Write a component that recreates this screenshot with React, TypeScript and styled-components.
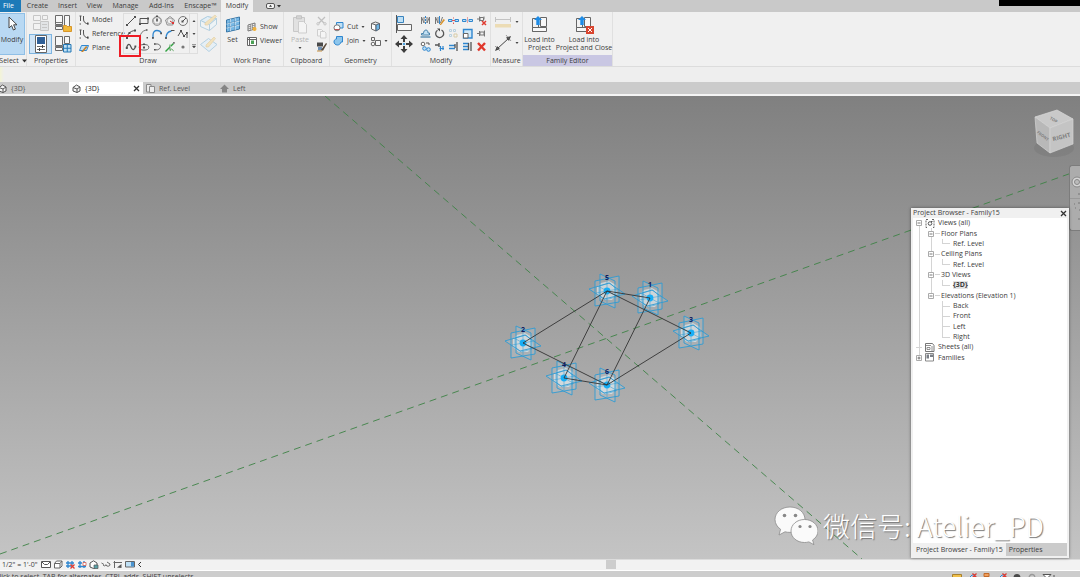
import React from "react";
import styled, { createGlobalStyle, css } from "styled-components";

const ink = "#505050";
const blue = "#2f86cf";
const pale = "#bfe0f5";

const GlobalStyle = createGlobalStyle`
  * { box-sizing: border-box; }
  html, body, #root { height: 100%; }
  body {
    margin: 0;
    overflow: hidden;
    background: #cbcbcb;
    color: #3c3c3c;
    font: 7px/8px "Open Sans", "Noto Sans", sans-serif;
  }
  button {
    margin: 0;
    padding: 0;
    border: 0;
    background: none;
    color: inherit;
    font: inherit;
    white-space: nowrap;
  }
  ul { margin: 0; padding: 0; list-style: none; }
  svg { display: block; flex: none; }
`;

/* ---------- icons ---------- */

type Art = { w: number; h: number; body: React.ReactNode };
const art = (w: number, h: number, body: React.ReactNode): Art => ({ w, h, body });

const icons = {
  cursor: art(12, 16, <path d="M3 1v11l2.6-2.4 1.8 4.4 2-.9-1.8-4.3H11z" fill="#fff" stroke="#444" />),
  typeFaded: art(18, 18, <g fill="#f2f2f2" stroke="#c6c6c6"><path d="M1.5 1.5h7v5h-7zM1.5 9.500h7v6h-7zM10.500 1.500h5v4h-5z" /><path d="M8.500 7.500h8v9h-8z" fill="#e2e4e6" /><path d="M10 10.500h5M10 13.500h5" /></g>),
  familyTypes: art(18, 18, <><path d="M1.500 1.500h7v9h-7zM1.500 12.500h7v3h-7zM10.500 1.500h5v11h-5z" fill="#f7f7f7" stroke="#6a6a6a" /><path d="M1 11.500h8M2 8.500h6" stroke="#777" /><path d="M9.500 11.500h3l1 1h4v5h-8z" fill="#f0b93a" stroke="#d9962a" /></>),
  properties: art(14, 18, <><path d="M1.500.5h11v17h-11z" fill="#fff" stroke="#666" /><path d="M3 2h8v7H3z" fill="#2e5f97" /><path d="M3 11.500h8M3 14.500h8" stroke="#666" /><path d="M8.500 10v3M5.500 13v3" stroke="#444" /></>),
  category: art(18, 18, <><path d="M1.500 1.500h7v9h-7zM1.500 12.500h7v3h-7zM10.500 1.500h5v7h-5z" fill="#f7f7f7" stroke="#6a6a6a" /><path d="M1 11.500h8" stroke="#777" /><path d="M9.500 9.500h7.500v7.500H9.500zM13.250 9.500V17M9.500 13.250H17" fill={pale} stroke="#2478b5" /></>),
  model: art(10, 10, <><path d="M4.500 1v3c0 3 1.500 4.500 5 5" fill="none" stroke="#555" /><path d="M.5 1h2M1.500 1v5M.5 9h1.500" stroke="#555" fill="none" /><path d="M8 7.500h1.500v2H8z" fill="#444" /></>),
  plane: art(10, 10, <><path d="M2.500 2.500h7l-2 5h-7z" fill={pale} stroke={blue} /><path d="M2 9l5-6 1.500 1L4 9z" fill="#c9822b" /></>),
  line: art(12, 12, <><path d="M2 10L10 2" stroke={ink} /><path d="M1 9h2v2H1zM9 1h2v2H9z" fill={ink} /></>),
  rect: art(12, 12, <><path d="M2 3.500h8v5H2z" fill="none" stroke={ink} /><path d="M1 8h2v2H1zM9 2.500h2v2H9z" fill={ink} /></>),
  polyIn: art(12, 12, <><circle cx="6" cy="6" r="4.500" fill="none" stroke="#888" strokeWidth=".8" /><path d="M6 1.500l4 3-1.500 4.500h-5L2 4.500z" fill="none" stroke="#777" strokeWidth=".6" /><path d="M5.200 3.500h1.600v3H5.200zM5 .5h2V2H5z" fill={ink} /></>),
  polyOut: art(12, 12, <><path d="M6 1.500l4.500 3.500-1.700 5H3.200L1.500 5z" fill="none" stroke="#777" strokeWidth=".8" /><circle cx="6" cy="6" r="2.800" fill="none" stroke="#999" strokeWidth=".7" /><path d="M6 6l3 2" stroke="#c33" /><path d="M8 7h2v2H8z" fill="#d33" /></>),
  circle: art(12, 12, <><circle cx="6" cy="6" r="4.500" fill="none" stroke="#777" /><path d="M5.500 6.500L9 3" stroke={ink} /><path d="M4.500 5.500h2v2h-2z" fill={ink} /></>),
  arcEnds: art(12, 12, <><path d="M2 10C2.500 6 5 3 10 2.500" fill="none" stroke={ink} /><path d="M1 9h2v2H1zM9 1.500h2v2H9zM3.500 4h2v2h-2z" fill={ink} /></>),
  arcCenter: art(12, 12, <><path d="M2 9C2.500 5 4.500 3 8 2" fill="none" stroke="#777" /><path d="M1 9h1.500v1.500H1zM8.500 9H10v1.500H8.500zM8 1.200h1.500v1.500H8z" fill={ink} /></>),
  arcTangent: art(12, 12, <><path d="M2 10.500V7c0-3 1.500-4.500 4-4.500 2 0 3.500 1 4.200 2.500" fill="none" stroke={blue} strokeWidth="1.300" /><path d="M1 9h1.800v1.800H1zM9.200 4.500h1.800v1.800H9.200z" fill={ink} /></>),
  fillet: art(12, 12, <><path d="M2 10.500c0-5 1.500-7 5.500-7.500" fill="none" stroke={blue} strokeWidth="1.300" /><path d="M7 2.500h3.500" stroke={ink} /><path d="M1.200 9h1.600v2H1.200z" fill={ink} /></>),
  splinePts: art(12, 12, <><path d="M1 8l3-5 3 5 3-3v5" fill="none" stroke={ink} /><path d="M3 2h2v2H3zM6 7h2v2H6zM9 4h1.800v1.800H9z" fill={ink} /></>),
  spline: art(12, 12, <><path d="M1.500 7C3 1.500 5 3 6 6s3 4 4.500-.5" fill="none" stroke={ink} strokeWidth="1.200" /><path d="M.8 6h2v2h-2zM9.500 4.500h1.800v1.800H9.500z" fill={ink} /></>),
  ellipse: art(12, 12, <><ellipse cx="6" cy="6.300" rx="4.800" ry="2.800" fill="none" stroke="#666" /><path d="M5 5.500h2v2H5zM5 2.500h2V4H5z" fill={ink} /></>),
  halfEllipse: art(12, 12, <><path d="M3.500 3h3C10.500 4 10.500 7.500 6.500 8.800H4" fill="none" stroke="#666" /><path d="M3 2.300h1.500v1.500H3zM3 8h1.500v1.500H3z" fill={ink} /></>),
  pick: art(12, 12, <><path d="M1.500 10.500l8-8" stroke="#31a142" strokeWidth="1.500" /><path d="M6 3.500v6l1.600-1.500 2 1.800" fill="#fff" stroke="#4b9a50" /><path d="M9 1h1.800v1.800H9z" fill="#777" /></>),
  point: art(12, 12, <circle cx="6" cy="6" r="1.600" fill="#777" />),
  faceFaded: art(20, 19, <><path d="M1.500 6.500l7-4 9 2-7 6z" fill="#e3eef5" stroke="#a9cbe0" /><path d="M1.500 6.500v6l9 4v-6l7-6v6l-7 6" fill="#edf3f6" stroke="#b5d0e0" /><path d="M6 9l10-8 1.500 1.500L8.500 11 6 11z" fill="#f2e2bd" stroke="#e0cfa4" strokeWidth=".6" /></>),
  planeFaded: art(20, 19, <><path d="M1.500 9.500l8-6 8.500 6-8 7z" fill="#e6eff5" stroke="#b4d1e3" /><path d="M7 10l8-8 1.500 1.500L9.500 12 7 12z" fill="#f2e2bd" stroke="#e0cfa4" strokeWidth=".6" /></>),
  set: art(16, 19, <g transform="translate(0 1)"><path d="M1.500 4l13-3v12l-13 3z" fill="#78b9e6" stroke="#3a78a8" /><path d="M5.500 3v12M10 2v12M1.500 8l13-3M1.500 12l13-3" stroke="#dff0fb" fill="none" /><path d="M5 3.200v12M9.500 2.200v12M1.500 7.500l13-3M1.500 11.500l13-3" stroke="#3a78a8" strokeWidth=".5" /></g>),
  show: art(10, 10, <><path d="M1 3l7-2v6L1 9z" fill="#fff" stroke="#777" /><path d="M3.300 2.500v6M5.600 2v6M1 5l7-2M1 7l7-2" stroke="#777" strokeWidth=".7" /><circle cx="7.500" cy="7" r="2" fill="#f0b23c" /></>),
  viewer: art(10, 10, <><path d="M.5 1.500h9v8h-9z" fill="#fff" stroke="#666" /><path d="M.5 3.500h9M2.500 1v8" stroke="#666" /><path d="M4 4.500h3v3.500H4z" fill="#4ba155" /></>),
  paste: art(16, 19, <><path d="M1.500 2.500h11v14h-11z" fill="#e1e1e1" stroke="#c8c8c8" /><path d="M4.500.8h5v3h-5z" fill="#d4d4d4" stroke="#c2c2c2" /><path d="M6.500 6.500h5l3 3v8.500h-8z" fill="#f4f4f4" stroke="#cdcdcd" /></>),
  cutFaded: art(11, 11, <><path d="M2 2l6 6M9 2L3 8" stroke="#c0c0c0" strokeWidth="1.300" /><circle cx="2" cy="8.800" r="1.200" fill="none" stroke="#c4c4c4" /><circle cx="9" cy="8.800" r="1.200" fill="none" stroke="#c4c4c4" /></>),
  copyFaded: art(11, 11, <g fill="#f5f5f5" stroke="#cfcfcf"><path d="M1.500 1.500h4l1.500 1.500v5h-5.500z" /><path d="M4.500 3.500h4l1.500 1.500v5h-5.500z" /></g>),
  match: art(11, 11, <><path d="M1 1.500h6v4H1z" fill="#4a4a4a" /><path d="M2 6h4v3.500H2z" fill="#6d8fb3" /><path d="M5 9l5-7 1 .8-4 7z" fill="#58493a" /><path d="M1 10h5" stroke="#c9903e" /></>),
  cutGeo: art(11, 11, <><path d="M3.500 1.500h6.500v5.500h-6.500z" fill={pale} stroke={blue} /><circle cx="4" cy="6.800" r="3" fill="#fff" stroke="#777" /><path d="M1.500 8.500h5" stroke="#b55" /></>),
  joinGeo: art(11, 11, <path d="M3.500 1.500h6v5.500H8c-.5 2-2 3-3.500 3-2 0-3.500-1.500-3.500-3 0-1.700 1-3 2.500-3z" fill="#8dc6ec" stroke={blue} />),
  splitFace: art(11, 11, <><path d="M1.500 2.500L6 4v6L1.500 8z" fill="#fff" stroke="#666" /><path d="M6 4l3.500-1.500V8L6 10z" fill="#6fb5e4" stroke="#567" /><path d="M1.500 2.500l4-1.500 4 1.500" fill="none" stroke="#666" /></>),
  cope: art(11, 11, <g fill="#f6f6f6" stroke="#666"><path d="M1.500 1.500h3v3h-3zM5.500 4.500h5v5h-5z" /><circle cx="3" cy="8" r="1.800" /></g>),
  align: art(18, 18, <><path d="M1.500 0v18" stroke="#555" /><path d="M2.500 1.500h6v6h-6z" fill={pale} stroke="#3a84bf" /><path d="M2.500 9.500h14v6h-14z" fill="#f7f7f7" stroke="#666" /></>),
  move: art(18, 18, <g fill="#3d3d3d"><path d="M9 0l3.500 4h-7zM9 18l3.500-4h-7zM0 9l4-3.500v7zM18 9l-4-3.500v7z" /><path d="M8 3h2v4H8zM8 11h2v4H8zM3 8h4v2H3zM11 8h4v2h-4z" /><circle cx="9" cy="9" r="1.300" fill="#4da0dd" /></g>),
  mirrorPick: art(11, 11, <><path d="M1.500 9V2L4 8V2M9.500 9V2L7 8V2" fill="none" stroke="#777" /><path d="M5.500 1v9" stroke={blue} strokeDasharray="2 1" /></>),
  mirrorDraw: art(11, 11, <><path d="M1.500 9V2L4 8V2M8.500 2L6.500 8" fill="none" stroke="#777" /><path d="M5.500 1v8" stroke={blue} /><path d="M5.500 10l4-6 1.500 1-4 5z" fill="#d9942c" /></>),
  split: art(11, 11, <><path d="M.5 4.500H4v2H.5zM7 4.500h3.500v2H7z" fill={pale} stroke={blue} /><path d="M4 5.500h3M5.500 2.500v1M5.500 7.500v1.500" stroke="#d55" /></>),
  splitGap: art(11, 11, <><path d="M.5 4.500H4v2H.5zM7 4.500h3.500v2H7z" fill={pale} stroke={blue} /><path d="M5.500 2.500v6" stroke="#d55" strokeDasharray="1 1" /></>),
  unpin: art(11, 11, <><path d="M1 4h2M3.500 1.500v5M4 2.500h3.500v3H4zM8 1.500v3" fill="none" stroke="#777" /><path d="M6 6l4 4M10 6l-4 4" stroke="#e03c31" strokeWidth="1.500" /></>),
  offset: art(11, 11, <><path d="M1.500 7V5.500h2c0-2 1-3.500 2.500-3.500s2 1.500 2 3h1.500V7z" fill="#c3e1f4" stroke="#4a82aa" /><path d="M.5 9h10" stroke="#4a82aa" strokeWidth="1.300" /></>),
  rotate: art(11, 11, <><path d="M3.500 2.200A4 4 0 1 0 7.500 2" fill="none" stroke="#555" strokeWidth="1.300" /><path d="M3 .5h3v3z" fill="#444" /></>),
  arrayFaded: art(11, 11, <g fill="#eef3f6" stroke="#b9d0df"><path d="M1.500 1.500h2v2h-2zM5.500 1.500h2v2h-2zM1.500 6.500h2v2h-2z" /><path d="M6 6h3v3H6z" stroke="#d9cba6" /></g>),
  scale: art(11, 11, <><path d="M1.500 1.500h8.500v8.500H1.500z" fill="#cfe8f8" stroke={blue} strokeWidth="1.400" /><path d="M1.500 5.500h4.500V10H1.500z" fill="#fff" stroke="#666" /></>),
  pin: art(11, 11, <path d="M1 5.500h2.500M3.500 3v5M4 4h4v3H4zM8.500 2.500v6" fill="none" stroke="#777" />),
  copy: art(11, 11, <><circle cx="3" cy="3" r="1.800" fill="#fff" stroke="#666" /><path d="M6 2h3v2" fill="none" stroke="#555" /><circle cx="4.500" cy="7.500" r="1.800" fill={pale} stroke={blue} /><circle cx="8.500" cy="8.500" r="1.800" fill={pale} stroke={blue} /></>),
  trimCorner: art(11, 11, <><path d="M1 4h4M5 2v4" stroke="#555" strokeWidth="1.400" /><path d="M5.500 7.500H10M6.500 5v5M9 5v4" stroke={blue} strokeWidth="1.200" /></>),
  trimOne: art(11, 11, <><path d="M1 4.500h6M1 7.500h6" stroke={blue} strokeWidth="1.300" /><path d="M9 1v9M7 3v4" stroke="#555" strokeWidth="1.300" /></>),
  trimMulti: art(11, 11, <><path d="M1 2.500h6M1 5.500h6M1 8.500h6" stroke={blue} strokeWidth="1.300" /><path d="M9 1v9M6.500 2v7" stroke="#555" strokeWidth="1.300" /></>),
  remove: art(11, 11, <path d="M2 2l7 7.500M9 2L2 9.500" stroke="#e0382c" strokeWidth="2.400" />),
  measureFaded: art(18, 13, <><path d="M1 3.500h16M1.500 1v5M16.500 1v5" stroke="#c3c3c3" /><path d="M1 8h16v3.500H1z" fill="#ecdcb5" /></>),
  dimension: art(18, 18, <><path d="M3 15L15 4" stroke="#444" /><path d="M1 17l2-5 3 3zM17 2l-5 1.500 3 3.500z" fill="#444" /><path d="M1 12l5 5M12 1l5 6" stroke="#777" strokeWidth=".7" /></>),
  load: art(22, 19, <><path d="M3.500 3.500h6v13h-6z" fill="#f2f2f2" stroke="#666" /><path d="M11.500 2.500h6v9h-6z" fill="#f8f8f8" stroke="#666" /><path d="M3.500 12.500h14v4h-14z" fill="#f8f8f8" stroke="#666" /><path d="M9 1l4 4h-2.300v5H7.300V5H5z" fill="#1f8ce6" /></>),
  loadClose: art(22, 19, <><path d="M3.500 3.500h6v13h-6z" fill="#f2f2f2" stroke="#666" /><path d="M11.500 2.500h6v9h-6z" fill="#f8f8f8" stroke="#666" /><path d="M3.500 12.500h14v4h-14z" fill="#f8f8f8" stroke="#666" /><path d="M9 1l4 4h-2.300v5H7.300V5H5z" fill="#1f8ce6" /><path d="M13 11h8v8h-8z" fill="#d9452f" /><path d="M15 13l4 4M19 13l-4 4" stroke="#fff" /></>),
  playlist: art(16, 8, <><rect x=".5" y="1.500" width="8" height="5" rx="1.500" fill="#f5f5f5" stroke="#555" /><path d="M4.500 2.800l1.500 2H3z" fill="#333" /><path d="M11 3h4l-2 2.500z" fill="#333" /></>),
  down: art(4, 4, <path d="M.5 1h3L2 3z" fill="#444" />),
  up: art(4, 4, <path d="M.5 3h3L2 1z" fill="#444" />),
  more: art(4, 5, <path d="M0 .5h4M.5 2h3L2 4z" fill="#444" stroke="#444" strokeWidth=".5" />),
  menuArrow: art(5, 4, <path d="M0 .5h5L2.500 3.500z" fill="#333" />),
  house3d: art(9, 9, <><path d="M1 3.500L4.500 1 8 3v4L5 8.500 1 7z" fill="#f5f5f5" stroke="#555" /><path d="M1 3.500L5 5v3.500M5 5l3-2" fill="none" stroke="#555" /></>),
  planView: art(9, 9, <g fill="#ececec" stroke="#8a8a8a"><path d="M.5.5H5V8H.5z" /><path d="M3.500 2.500h5v6h-5z" /></g>),
  elevation: art(9, 9, <path d="M4.500.5L9 5H7v3.500H2V5H0z" fill="#858585" />),
  close: art(7, 7, <path d="M1 1l5 5M6 1L1 6" stroke="#333" strokeWidth="1.300" />),
  minus: art(6, 6, <><path d="M.5.5h5v5h-5z" fill="#fff" stroke="#aaa" /><path d="M1.500 3h3" stroke="#555" strokeWidth=".8" /></>),
  plus: art(6, 6, <><path d="M.5.5h5v5h-5z" fill="#fff" stroke="#aaa" /><path d="M1.500 3h3M3 1.500v3" stroke="#555" strokeWidth=".8" /></>),
  views: art(10, 9, <><path d="M3 .5H1v8h2M7 .5h2v8H7" fill="none" stroke="#666" strokeDasharray="2 1" /><circle cx="5" cy="4.500" r="1.800" fill="none" stroke="#555" /><path d="M6 2.500h1.500" stroke="#555" /></>),
  sheets: art(10, 9, <><path d="M.5.5h7l1.500 2v6h-8.500z" fill="#fff" stroke="#777" /><path d="M1 2.500h5M2 4.500h3v2H2zM7 3v5" fill="none" stroke="#777" strokeWidth=".8" /></>),
  families: art(10, 9, <><path d="M.5.5h8v7.500h-8z" fill="#fff" stroke="#888" /><path d="M1.500 1.500H4v4H1.500zM5 1.500h3v2.500H5z" fill="#7a7f86" /></>),
  detail: art(10, 9, <><path d="M.5 1.500h9v6h-9z" fill="#fff" stroke="#555" /><path d="M1 2l2.500 2.500h3L9 2" fill="none" stroke="#555" /></>),
  visual: art(10, 9, <path d="M1.500 3.500h5.500v4.500H1.500zM1.500 3.500l2-2.500H9L7 3.500M9 1v5L7 8" fill="#fff" stroke="#666" />),
  crop: art(10, 9, <><path d="M1 3h8M3 1v7M7 1v5M1 6h6" stroke={blue} strokeWidth="1.300" /><path d="M5.500 4.500l4 4M9.500 4.500l-4 4" stroke="#e03c31" strokeWidth="1.300" /></>),
  cropShow: art(10, 9, <><path d="M1 6.500h8M3 1v7M7 1v7M1 3h4" stroke={blue} strokeWidth="1.300" /><path d="M6 2.500h3v3H6z" fill="#fff" stroke="#d05a50" strokeWidth=".8" /></>),
  lock3d: art(10, 9, <><path d="M1 3L4.500.8 8 3v4L4.500 8.500 1 7z" fill="#fff" stroke="#555" /><path d="M5 5h4v3.500H5z" fill="#5aa2a8" stroke="#555" strokeWidth=".7" /></>),
  hide: art(10, 9, <path d="M.5 3l2.500 1.500M2 5a2 2 0 0 0 3 0M5 4.500a2 2 0 0 0 4-.5L6 2" fill="none" stroke="#666" />),
  reveal: art(10, 9, <><path d="M1.500 1v7M.5 2.500h8.500" fill="none" stroke="#666" /><path d="M4 7.500L8.500 4v4z" fill="#555" /></>),
  temp: art(10, 9, <><path d="M.5 1.500h9v5.500h-9z" fill={pale} stroke="#666" /><path d="M6 2h3v4.500H6z" fill="#4a93cf" /></>),
  left: art(5, 7, <path d="M4 1L1.500 3.500 4 6" fill="none" stroke="#333" />),
  stWork: art(10, 6, <path d="M.5 1.500h9V6h-9z" fill="#f0c04a" stroke="#a8812f" />),
  stLink: art(10, 6, <><path d="M1 6l4-4h3v4z" fill={pale} stroke={blue} /><path d="M5.500.5l4 4M9.500.5l-4 4" stroke="#e03c31" strokeWidth="1.300" /></>),
  stPin: art(10, 6, <><path d="M2 .5h5v3H2z" fill="#f1a05d" stroke="#c26a2b" /><path d="M5 5h4" stroke="#555" strokeWidth="1.500" /></>),
  stGear: art(10, 6, <path d="M1.500 5c0-2.500 1-4 3.500-4s3.500 1.500 3.500 4z" fill="#4a4a4a" />),
  stRing: art(10, 6, <path d="M2 6c0-3 1-4.500 3-4.500S8 3 8 6" fill="none" stroke="#999" strokeWidth="1.300" />),
  stFilter: art(14, 6, <><path d="M1 1.500h8L6.500 4v2h-3V4z" fill="#fff" stroke="#555" /><path d="M12 2v4" stroke="#555" /></>),
};
type IconName = keyof typeof icons;

const Icon = ({ name }: { name: IconName }) => {
  const { w, h, body } = icons[name];
  return <svg width={w} height={h} viewBox={`0 0 ${w} ${h}`} aria-hidden="true">{body}</svg>;
};

/* ---------- frame ---------- */

const Page = styled.div`
  display: flex;
  flex-direction: column;
  height: 100vh;
  overflow: hidden;
`;

const MenuBar = styled.nav`
  position: relative;
  display: flex;
  align-items: stretch;
  flex: none;
  height: 12px;
  background: #c9c9c9;
`;

const MenuTab = styled.button<{ $width: number; $kind?: "file" | "active" }>`
  width: ${(p) => p.$width}px;
  text-align: center;
  ${(p) => p.$kind === "file" && css`background: #1d7ab8; color: #fff; padding-right: 4px;`}
  ${(p) => p.$kind === "active" && css`background: #f0f0f0;`}
`;

const PlaylistButton = styled.button`
  display: flex;
  align-items: center;
  padding-left: 13px;
`;

const BlackStrip = styled.div`
  position: absolute;
  top: 0;
  right: 0;
  width: 81px;
  height: 6px;
  background: #000;
`;

/* ---------- ribbon ---------- */

const Ribbon = styled.div`
  display: flex;
  flex: none;
  height: 55px;
  background: #f0f0f0;
  border-bottom: 1px solid #dcdcdc;
`;

const PanelBox = styled.section<{ $width: number }>`
  display: flex;
  flex-direction: column;
  flex: none;
  width: ${(p) => p.$width}px;
  border-right: 1px solid #e0e0e0;
`;

const PanelBody = styled.div<{ $gap?: number; $pad?: number }>`
  display: flex;
  flex: 1;
  align-items: center;
  gap: ${(p) => p.$gap ?? 0}px;
  padding-left: ${(p) => p.$pad ?? 0}px;
`;

const Caption = styled.div<{ $tinted?: boolean }>`
  display: flex;
  align-items: center;
  justify-content: center;
  gap: 3px;
  flex: none;
  height: 11px;
  white-space: nowrap;
  ${(p) => p.$tinted && css`background: #c9c7e3;`}
`;

const Stack = styled.div<{ $width?: number; $gap?: number; $center?: boolean }>`
  display: flex;
  flex-direction: column;
  flex: none;
  gap: ${(p) => p.$gap ?? 2}px;
  ${(p) => p.$width && css`width: ${p.$width}px;`}
  ${(p) => p.$center && css`align-items: center;`}
`;

const BigButton = styled.button<{ $width: number; $selected?: boolean; $faded?: boolean }>`
  display: flex;
  flex-direction: column;
  align-items: center;
  flex: none;
  gap: 2px;
  width: ${(p) => p.$width}px;
  height: 42px;
  padding-top: 2px;
  ${(p) => p.$selected && css`
    background: #b9d9f3;
    border: 1px solid #8fbfe6;
    border-left: 0;
    gap: 4px;
    padding-top: 2px;
  `}
  ${(p) => p.$faded && css`color: #b5b5b5;`}
`;

const IconButton = styled.button<{ $selected?: boolean }>`
  display: flex;
  align-items: center;
  justify-content: center;
  gap: 3px;
  ${(p) => p.$selected && css`
    width: 21px;
    background: #cfe4f6;
    outline: 1px solid #7db4e0;
  `}
`;

const LabelButton = styled.button`
  display: flex;
  align-items: center;
  gap: 3px;
  height: 12px;
`;

const Gallery = styled.div`
  position: relative;
  display: flex;
  margin-right: 1px;
  border: 1px solid #dedede;
`;

const ToolGrid = styled.div<{ $pitch: number }>`
  display: grid;
  grid-template-columns: repeat(5, ${(p) => p.$pitch}px);
  grid-auto-rows: 13px;
`;

const GalleryScroll = styled.div`
  display: grid;
  grid-template-rows: repeat(3, 1fr);
  width: 8px;
  border-left: 1px solid #dedede;
`;

const Highlight = styled.div`
  position: absolute;
  left: -5px;
  bottom: -4px;
  width: 22px;
  height: 22px;
  border: 2px solid #ee1c25;
`;

const OptionsBar = styled.div`
  flex: none;
  height: 15px;
  background: linear-gradient(90deg, #f3f4d6, #eee 4px);
`;

/* ---------- document tabs ---------- */

const DocTabs = styled.div`
  display: flex;
  flex: none;
  height: 14px;
  margin-left: -5px;
  background: #cbcbcb;
  border-bottom: 2px solid #f4f4f4;
`;

const DocTab = styled.div<{ $active?: boolean }>`
  display: flex;
  align-items: center;
  justify-content: space-between;
  width: 74px;
  padding: 1px 3px 0;
  color: #555;
  ${(p) => p.$active && css`background: #fff; color: #222;`}
`;

const DocName = styled.button`
  display: flex;
  align-items: center;
  gap: 4px;
`;

/* ---------- drawing area ---------- */

const Canvas = styled.main`
  position: relative;
  flex: 1;
  min-height: 0;
  background: linear-gradient(#808080, #c4c4c4);
`;

const Scene = styled.svg`
  position: absolute;
  inset: 0;
  width: 100%;
  height: 100%;
`;

const ViewCube = styled.svg`
  position: absolute;
  top: 10px;
  right: 0;
`;

const NavBar = styled.div`
  position: absolute;
  top: 69px;
  right: 0;
  width: 11px;
  height: 66px;
  overflow: hidden;
  border: 1px solid #7c7c7c;
  border-right: 0;
  border-radius: 3px 0 0 3px;
  background: #acacac;
`;

const Browser = styled.aside`
  position: absolute;
  top: 112px;
  right: 11px;
  bottom: 1px;
  display: flex;
  flex-direction: column;
  width: 158px;
  padding: 0 2px 2px;
  background: #f0f0f0;
  box-shadow: 0 0 3px rgba(0, 0, 0, 0.45);
`;

const BrowserTitle = styled.header`
  display: flex;
  align-items: center;
  justify-content: space-between;
  flex: none;
  height: 10px;
`;

const BrowserBody = styled.div`
  flex: 1;
  min-height: 0;
  background: #fff;
`;

const Tree = styled.ul`
  display: grid;
  grid-auto-rows: 1fr;
  height: 145px;
`;

const guideColor = "linear-gradient(#d4d4d4, #d4d4d4)";

/* Each guide is a vertical connector: full row height, or only its upper half where the branch ends. */
const TreeRow = styled.li<{ $level: number; $guides: string[] }>`
  display: flex;
  align-items: center;
  gap: ${(p) => (p.$level === 1 ? 1 : 3)}px;
  padding-left: ${(p) => [3, 15, 29][p.$level]}px;
  white-space: nowrap;
  background: ${(p) => p.$guides.map((g) => `${guideColor} ${g} no-repeat`).join(", ")};
`;

const Twig = styled.span<{ $width: number }>`
  width: ${(p) => p.$width}px;
  height: 1px;
  background: #d4d4d4;
`;

const TreeName = styled.span<{ $current?: boolean }>`
  ${(p) => p.$current && css`background: #e4e4e4; font-weight: 700;`}
`;

const BrowserTabs = styled.footer`
  display: flex;
  flex: none;
  height: 13px;
  background: #cbcbcb;
`;

const BrowserTab = styled.button<{ $active?: boolean }>`
  padding: 0 3px;
  ${(p) => p.$active && css`background: #f0f0f0;`}
`;

const Watermark = styled.div`
  position: absolute;
  right: 36px;
  bottom: 13px;
  display: flex;
  align-items: center;
  gap: 5px;
  color: #fff;
  font: 300 27px/32px "Noto Sans CJK SC", sans-serif;
  white-space: nowrap;
  text-shadow: 1px 1px 1px #777;
`;

/* ---------- bottom bars ---------- */

const ViewBar = styled.div`
  display: flex;
  align-items: center;
  flex: none;
  height: 12px;
  padding: 0 0 1px 2px;
  background: #f2f2f2;
  border-top: 1px solid #dcdcdc;
  border-bottom: 1px solid #fff;
`;

const ScaleButton = styled.button`
  width: 39px;
  text-align: left;
`;

const ViewTools = styled.div`
  display: flex;
  align-items: center;
  gap: 2px;
`;

const ScrollTrack = styled.div`
  flex: 1;
  height: 9px;
  padding-left: 43%;
`;

const ScrollThumb = styled.div`
  width: 10px;
  height: 9px;
  background: #cdcdcd;
`;

const StatusBar = styled.footer`
  display: flex;
  justify-content: space-between;
  flex: none;
  height: 6px;
  padding: 2px 24px 0 0;
  overflow: hidden;
  white-space: nowrap;
  background: #cdcdcd;
`;

const StatusText = styled.span`
  margin-left: -5px;
`;

const StatusTools = styled.div`
  display: flex;
  gap: 5px;
`;

/* ---------- pieces ---------- */

type PanelProps = { title: string; width: number; gap?: number; pad?: number; arrow?: boolean; tinted?: boolean; children: React.ReactNode };

const Panel = ({ title, width, gap, pad, arrow, tinted, children }: PanelProps) => (
  <PanelBox $width={width}>
    <PanelBody $gap={gap} $pad={pad}>{children}</PanelBody>
    <Caption $tinted={tinted}>{title}{arrow && <Icon name="menuArrow" />}</Caption>
  </PanelBox>
);

const Tool = ({ name, arrow, selected }: { name: IconName; arrow?: boolean; selected?: boolean }) => (
  <IconButton aria-label={name} $selected={selected}>
    <Icon name={name} />
    {arrow && <Icon name="down" />}
  </IconButton>
);

const drawTools: IconName[] = ["line", "rect", "polyIn", "polyOut", "circle", "arcEnds", "arcCenter", "arcTangent", "fillet", "splinePts", "spline", "ellipse", "halfEllipse", "pick", "point"];
const modifyTools: IconName[] = ["mirrorPick", "mirrorDraw", "split", "splitGap", "unpin", "offset", "rotate", "arrayFaded", "scale", "pin", "copy", "trimCorner", "trimOne", "trimMulti", "remove"];
const viewTools: IconName[] = ["detail", "visual", "crop", "cropShow", "lock3d", "hide", "reveal", "temp", "left"];
const statusTools: IconName[] = ["stWork", "stLink", "stPin", "stLink", "stGear", "stRing", "stFilter"];

const root = "6px 0 / 1px 100%";
const rootEnd = "6px 0 / 1px 50%";
const branch = "18px 0 / 1px 100%";
const branchEnd = "18px 0 / 1px 50%";
const leaf = "29px 0 / 1px 100%";
const leafEnd = "29px 0 / 1px 50%";

type Row = { name: string; level: number; guides: string[]; fold?: "minus" | "plus"; icon?: IconName; current?: boolean };
const rows: Row[] = [
  { name: "Views (all)", level: 0, guides: ["6px 100% / 1px 50%"], fold: "minus", icon: "views" },
  { name: "Floor Plans", level: 1, guides: [root, branch], fold: "minus" },
  { name: "Ref. Level", level: 2, guides: [root, branch, leafEnd] },
  { name: "Ceiling Plans", level: 1, guides: [root, branch], fold: "minus" },
  { name: "Ref. Level", level: 2, guides: [root, branch, leafEnd] },
  { name: "3D Views", level: 1, guides: [root, branch], fold: "minus" },
  { name: "{3D}", level: 2, guides: [root, branch, leafEnd], current: true },
  { name: "Elevations (Elevation 1)", level: 1, guides: [root, branchEnd], fold: "minus" },
  { name: "Back", level: 2, guides: [root, leaf] },
  { name: "Front", level: 2, guides: [root, leaf] },
  { name: "Left", level: 2, guides: [root, leaf] },
  { name: "Right", level: 2, guides: [root, leafEnd] },
  { name: "Sheets (all)", level: 0, guides: [root], icon: "sheets" },
  { name: "Families", level: 0, guides: [rootEnd], fold: "plus", icon: "families" },
];

const nodes: Record<string, [number, number]> = {
  "5": [607, 195], "1": [650, 202], "3": [691, 237], "2": [523, 247], "4": [564, 282], "6": [607, 289],
};
const edges = ["52", "26", "54", "51", "53", "16", "36", "46"];

const NodePlanes = ({ x, y }: { x: number; y: number }) => (
  <g transform={`translate(${x} ${y})`}>
    <path d="M-7-17L8-10V17L-7 10zM-12-10L12-15V11L-12 15zM-18-2L2-8 18 3-3 8z" fill="#cfe6f2" fillOpacity=".18" />
    <path d="M-6-8L2-10 9-6 10 3 5 9-4 9-10 4-10-4z" fill="#e2ecf1" opacity=".65" />
    <g fill="none" stroke="#2f9bd2" strokeWidth=".9">
      <path d="M-7-17L8-10V17L-7 10zM-12-10L12-15V11L-12 15zM-18-2L2-8 18 3-3 8z" />
      <path d="M-8-5L3-8 9-2V6L-2 9-8 4zM0-12V12M-11 2L11-2M-9-5L9 5" strokeWidth=".5" />
    </g>
    <circle r="3.400" fill="#18aef5" />
  </g>
);

export default function App() {
  return (
    <Page>
      <GlobalStyle />
      <MenuBar>
        <MenuTab $width={21} $kind="file">File</MenuTab>
        <MenuTab $width={33}>Create</MenuTab>
        <MenuTab $width={27}>Insert</MenuTab>
        <MenuTab $width={27}>View</MenuTab>
        <MenuTab $width={35}>Manage</MenuTab>
        <MenuTab $width={37}>Add-Ins</MenuTab>
        <MenuTab $width={41}>Enscape™</MenuTab>
        <MenuTab $width={32} $kind="active">Modify</MenuTab>
        <PlaylistButton aria-label="Ribbon display"><Icon name="playlist" /></PlaylistButton>
        <BlackStrip />
      </MenuBar>

      <Ribbon>
        <Panel title="Select" width={27} arrow>
          <BigButton $width={25} $selected><Icon name="cursor" />Modify</BigButton>
        </Panel>
        <Panel title="Properties" width={49} gap={3} pad={3}>
          <Stack $gap={3} $center><Tool name="typeFaded" /><Tool name="properties" selected /></Stack>
          <Stack $gap={3} $center><Tool name="familyTypes" /><Tool name="category" /></Stack>
        </Panel>
        <Panel title="Draw" width={145} pad={3}>
          <Stack $width={44} $gap={2}>
            <LabelButton><Icon name="model" />Model</LabelButton>
            <LabelButton><Icon name="model" />Reference</LabelButton>
            <LabelButton><Icon name="plane" />Plane</LabelButton>
          </Stack>
          <Gallery>
            <ToolGrid $pitch={13}>{drawTools.map((n) => <Tool key={n} name={n} />)}</ToolGrid>
            <GalleryScroll><Tool name="up" /><Tool name="down" /><Tool name="more" /></GalleryScroll>
            <Highlight />
          </Gallery>
          <Stack $gap={2}><Tool name="faceFaded" /><Tool name="planeFaded" /></Stack>
        </Panel>
        <Panel title="Work Plane" width={63} gap={3}>
          <BigButton $width={23}><Icon name="set" />Set</BigButton>
          <Stack>
            <LabelButton><Icon name="show" />Show</LabelButton>
            <LabelButton><Icon name="viewer" />Viewer</LabelButton>
          </Stack>
        </Panel>
        <Panel title="Clipboard" width={46} gap={3} pad={3}>
          <BigButton $width={26} $faded><Icon name="paste" />Paste<Icon name="down" /></BigButton>
          <Stack $gap={2}><Tool name="cutFaded" /><Tool name="copyFaded" /><Tool name="match" /></Stack>
        </Panel>
        <Panel title="Geometry" width={62} gap={3} pad={3}>
          <Stack $width={34}>
            <LabelButton><Icon name="cutGeo" />Cut<Icon name="down" /></LabelButton>
            <LabelButton><Icon name="joinGeo" />Join<Icon name="down" /></LabelButton>
          </Stack>
          <Stack $gap={3}>
            <LabelButton aria-label="splitFace"><Icon name="splitFace" /></LabelButton>
            <Tool name="cope" arrow />
          </Stack>
        </Panel>
        <Panel title="Modify" width={99} gap={5} pad={3}>
          <Stack $gap={2}><Tool name="align" /><Tool name="move" /></Stack>
          <ToolGrid $pitch={14}>{modifyTools.map((n) => <Tool key={n} name={n} />)}</ToolGrid>
        </Panel>
        <Panel title="Measure" width={32} pad={3}>
          <Stack $gap={5}><Tool name="measureFaded" arrow /><Tool name="dimension" arrow /></Stack>
        </Panel>
        <Panel title="Family Editor" width={90} tinted>
          <BigButton $width={33}><Icon name="load" /><span>Load into<br />Project</span></BigButton>
          <BigButton $width={56}><Icon name="loadClose" /><span>Load into<br />Project and Close</span></BigButton>
        </Panel>
      </Ribbon>
      <OptionsBar />

      <DocTabs>
        <DocTab><DocName><Icon name="house3d" />{"{3D}"}</DocName></DocTab>
        <DocTab $active>
          <DocName><Icon name="house3d" />{"{3D}"}</DocName>
          <button aria-label="Close tab"><Icon name="close" /></button>
        </DocTab>
        <DocTab><DocName><Icon name="planView" />Ref. Level</DocName></DocTab>
        <DocTab><DocName><Icon name="elevation" />Left</DocName></DocTab>
      </DocTabs>

      <Canvas>
        <Scene viewBox="0 0 1080 463" preserveAspectRatio="xMidYMid slice">
          <g stroke="#3d8245" strokeWidth=".9" strokeDasharray="7 5">
            <path d="M325 0L862 463" />
            <path d="M0 458L1080 74" />
          </g>
          {Object.entries(nodes).map(([label, [x, y]]) => <NodePlanes key={label} x={x} y={y} />)}
          <g stroke="#333" strokeWidth=".9">
            {edges.map((e) => {
              const [a, b] = [nodes[e[0]], nodes[e[1]]];
              return <line key={e} x1={a[0]} y1={a[1]} x2={b[0]} y2={b[1]} />;
            })}
          </g>
          <g textAnchor="middle" fontSize="7" fontWeight="700" fill="#10185c">
            {Object.entries(nodes).map(([label, [x, y]]) => <text key={label} x={x} y={y - 11}>{label}</text>)}
          </g>
        </Scene>

        <ViewCube width="52" height="56" viewBox="0 0 52 56">
          <ellipse cx="26" cy="42" rx="20" ry="9" fill="#666" opacity=".2" />
          <path d="M29 4L45 13 22 22 7 11z" fill="#c9c9c9" stroke="#dadada" strokeWidth=".7" />
          <path d="M7 11L22 22V47L9 37z" fill="#b8b8b8" stroke="#d4d4d4" strokeWidth=".7" />
          <path d="M22 22L45 13V38L22 47z" fill="#c4c4c4" stroke="#d4d4d4" strokeWidth=".7" />
          <g fill="#808080" fontSize="6" fontWeight="700" textAnchor="middle">
            <text transform="translate(34 33) rotate(-14)">RIGHT</text>
            <text transform="translate(14 31) rotate(38)" fontSize="4">FRONT</text>
            <text transform="translate(25 15) rotate(30)" fontSize="4">TOP</text>
          </g>
        </ViewCube>

        <NavBar>
          <svg width="11" height="64" viewBox="0 0 11 64">
            <circle cx="7" cy="16" r="5" fill="#d5d5d5" stroke="#888" />
            <circle cx="7" cy="16" r="2.500" fill="#bbb" stroke="#888" />
            <path d="M10 20h1v4h-1z" fill="#4a90d0" />
            <path d="M0 32.500h11" stroke="#999" />
            <path d="M8 28h2M4 38h1M8 37h2M5 42h1M9 44h2M8 53h2" stroke="#777" />
          </svg>
        </NavBar>

        <Browser>
          <BrowserTitle>
            Project Browser - Family15
            <button aria-label="Close browser"><Icon name="close" /></button>
          </BrowserTitle>
          <BrowserBody>
            <Tree>
              {rows.map((r, i) => (
                <TreeRow key={i} $level={r.level} $guides={r.guides}>
                  {r.fold ? <Icon name={r.fold} /> : r.level === 0 ? <Twig $width={6} /> : null}
                  {r.level === 1 && <Twig $width={5} />}
                  {r.level === 2 && <Twig $width={8} />}
                  {r.icon && <Icon name={r.icon} />}
                  <TreeName $current={r.current}>{r.name}</TreeName>
                </TreeRow>
              ))}
            </Tree>
          </BrowserBody>
          <BrowserTabs>
            <BrowserTab $active>Project Browser - Family15</BrowserTab>
            <BrowserTab>Properties</BrowserTab>
          </BrowserTabs>
        </Browser>

        <Watermark>
          <svg width="44" height="40" viewBox="0 0 44 40">
            <g fill="#fafafa" stroke="#8a8a8a" strokeWidth=".8">
              <path d="M16 1C7.500 1 1 6.500 1 13.500c0 4 2.200 7.500 5.600 9.800L5 29l6-3.200c1.600.4 3.200.6 5 .6 8.500 0 15-5.500 15-12.700S24.500 1 16 1z" />
              <path d="M30.500 13.500c-7.500 0-13.500 5-13.500 11.500s6 11.500 13.500 11.500c1.500 0 3-.2 4.400-.6l5 2.800-1.300-4.700c3.300-2.100 5.400-5.300 5.400-9 0-6.500-6-11.500-13.500-11.500z" />
            </g>
            <g fill="#888"><circle cx="10.500" cy="9.500" r="1.800" /><circle cx="21.500" cy="9.500" r="1.800" /><circle cx="26" cy="20.500" r="1.600" /><circle cx="36" cy="20.500" r="1.600" /></g>
          </svg>
          <span>微信号: Atelier_PD</span>
        </Watermark>
      </Canvas>

      <ViewBar>
        <ScaleButton>1/2" = 1'-0"</ScaleButton>
        <ViewTools>{viewTools.map((n) => <Tool key={n} name={n} />)}</ViewTools>
        <ScrollTrack><ScrollThumb /></ScrollTrack>
      </ViewBar>
      <StatusBar>
        <StatusText>Click to select, TAB for alternates, CTRL adds, SHIFT unselects.</StatusText>
        <StatusTools>{statusTools.map((n, i) => <Icon key={i} name={n} />)}</StatusTools>
      </StatusBar>
    </Page>
  );
}
